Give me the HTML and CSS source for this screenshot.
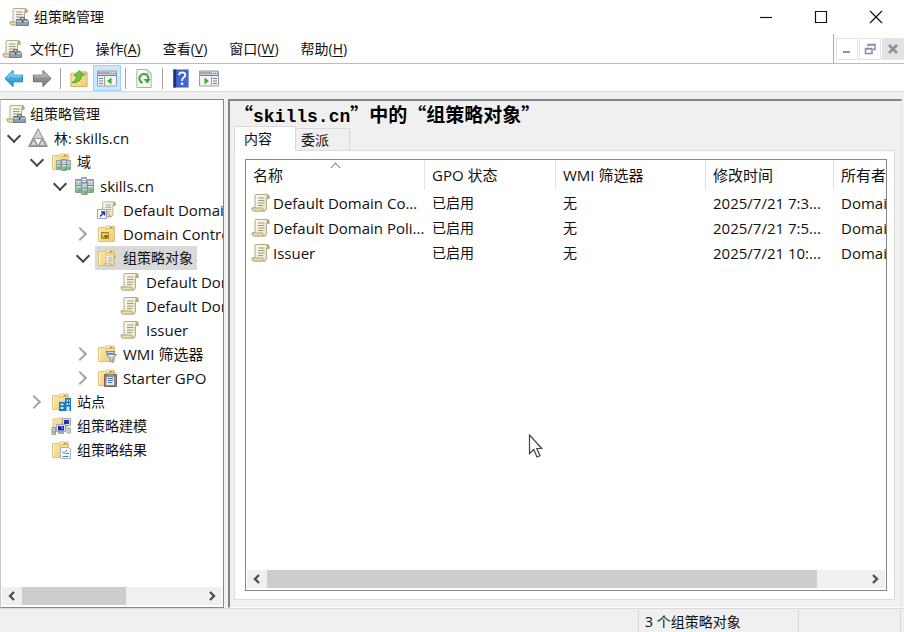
FILE: index.html
```html
<!DOCTYPE html>
<html lang="zh-CN">
<head>
<meta charset="utf-8">
<title>组策略管理</title>
<link rel="stylesheet" href="styles.css">
</head>
<body>
<svg class="sprite" aria-hidden="true">
  <defs>
    <linearGradient id="gold" x1="0" y1="0" x2="1" y2="1"><stop offset="0" stop-color="#fbe9ac"/><stop offset="1" stop-color="#f0cb74"/></linearGradient>
    <linearGradient id="paper" x1="0" y1="0" x2="1" y2="1"><stop offset="0" stop-color="#fffef5"/><stop offset="1" stop-color="#eadfb2"/></linearGradient>
    <linearGradient id="blue" x1="0" y1="0" x2="0" y2="1"><stop offset="0" stop-color="#63cbf6"/><stop offset="1" stop-color="#168fdc"/></linearGradient>
    <linearGradient id="steel" x1="0" y1="0" x2="0" y2="1"><stop offset="0" stop-color="#aaa"/><stop offset="1" stop-color="#777"/></linearGradient>
  </defs>
  <symbol id="scroll" viewBox="0 0 20 20">
    <path d="M5 1.500H16.500q1.500 0 1.500 2.500v1.500h-2.500V15q0 3-2.500 3H3q-2-.2-2-3h3V3q0-1.500 1-1.500z" fill="url(#paper)" stroke="#b3aa8d"/>
    <path d="M15.500 5.500V3.500q.2-2 1.500-2T18.500 4v1.500z" fill="#b5a878"/>
    <path d="M1 15h10.500q.2 3 2 3H3q-2-.2-2-3z" fill="#f3dfa0" stroke="#b0a689"/>
    <path d="M7 5h6.500M7 7.500h6.500M7 10h6.500M7 12.500h5" stroke="#9b9b98"/>
  </symbol>
  <symbol id="console" viewBox="0 0 20 20">
    <use href="#scroll" width="20" height="20"/>
    <path d="M11.500 12.500v-1q0-1 1-1h2q1 0 1 1v1" fill="none" stroke="#55626c" stroke-width="1.200"/>
    <path d="M8 12.500h10.500l1 2v4h-12v-4z" fill="#8fa0ae" stroke="#61717e" stroke-width=".8"/>
    <path d="M8 14.500h11" stroke="#c9d5dd" stroke-width=".8"/><path d="M12.800 13.500h1.700v2h-1.700z" fill="#3f4c56"/>
  </symbol>
  <symbol id="folder" viewBox="0 0 20 20">
    <path d="M1.500 3.500h6l1.500-1.500h7.500q1 0 1 1V17.500h-16z" fill="url(#gold)" stroke="#dfc47c"/>
    <path d="M10 3.500h6" stroke="#fff" stroke-width="1.500"/><path d="M12.500 3.500h3" stroke="#4f9de2" stroke-width="1.300"/>
    <path d="M8 6l1.500-1.500h8" fill="none" stroke="#d9b967"/><path d="M2.500 5v12" stroke="#fff3c4"/>
  </symbol>
  <symbol id="server" viewBox="0 0 6 12">
    <path d="M.5.500h5v11h-5z" fill="#a6b5bd" stroke="#7b8b94" stroke-width=".8"/>
    <path d="M1 2.500h4M1 4.500h4M1 6.500h4" stroke="#e1ebef"/><path d="M1 5.500h4" stroke="#71828c"/><path d="M2.500 8.500h2.500v2.500H2.500z" fill="#43d82d"/>
  </symbol>
  <symbol id="servers" viewBox="0 0 20 20">
    <use href="#server" x="7" y="1" width="6" height="12"/><use href="#server" x="1" y="3" width="7" height="14"/><use href="#server" x="13" y="3" width="7" height="14"/><use href="#server" x="7" y="6" width="7" height="13"/>
  </symbol>
  <symbol id="forest" viewBox="0 0 20 20">
    <path d="M10 .8 19.500 18.500H.5z" fill="#b3b7ba" stroke="#8d9296"/>
    <path d="M10 2 14 10H6z" fill="#d0d3d5"/>
    <path d="M6 10.500h8L10 18z" fill="#fff" stroke="#999"/><path d="m5.500 11.500 3.500 6H2.500zM14.500 11.500l3 6H11z" fill="#d8dbdc" stroke="#888" stroke-width=".8"/>
  </symbol>
  <symbol id="domains" viewBox="0 0 20 20">
    <use href="#folder" width="20" height="20"/><use href="#server" x="5" y="8" width="5" height="10"/><use href="#server" x="15" y="8" width="5" height="10"/><use href="#server" x="10" y="7" width="6" height="12"/>
  </symbol>
  <symbol id="link" viewBox="0 0 20 20">
    <use href="#scroll" x="2" width="18" height="19"/><path d="M.5 9.500h9v9h-9z" fill="#fff" stroke="#9da0d0"/>
    <path d="M4 12h3.500v3.500M7 12.500 3 16.500" fill="none" stroke="#26309b" stroke-width="1.500"/>
  </symbol>
  <symbol id="ou" viewBox="0 0 20 20">
    <use href="#folder" width="20" height="20"/><path d="M4.500 8.500h7v6h-7z" fill="#d8ad35" stroke="#a98424"/><path d="M5 10.500h6" stroke="#fbe69d"/><path d="M7.500 11h3v2.500h-3z" fill="#6c5214"/>
  </symbol>
  <symbol id="objects" viewBox="0 0 20 20">
    <use href="#folder" width="20" height="20"/><use href="#scroll" x="6" y="6" width="14" height="13"/>
  </symbol>
  <symbol id="wmi" viewBox="0 0 20 20">
    <use href="#folder" width="20" height="20"/><path d="M9 7.500h9l-1 2h-7zM9.500 10.500h10l-3.500 4v4l-3-1.500v-2.500z" fill="#c3d1d9" stroke="#7c8d97"/><path d="M11.500 11.500h5" stroke="#fff"/>
  </symbol>
  <symbol id="starter" viewBox="0 0 20 20">
    <use href="#folder" width="20" height="20"/><path d="M7.500 6.500h12v12h-12z" fill="#b27a5b" stroke="#8b5d45"/><path d="M9.500 8.500h8v9h-9z" fill="#dce9f4" stroke="#7990aa"/><path d="M11 5.500h5v2h-5z" fill="#999"/><path d="M11 10.500h5M11 12.500h5M11 14.500h4" stroke="#4b78a5"/>
  </symbol>
  <symbol id="sites" viewBox="0 0 20 20">
    <use href="#folder" width="20" height="20"/><path d="M8 10h6V6h6v13H8z" fill="#1678bd"/><path d="M9.500 11.500h3v2h-3zM9.500 15h3v2h-3zM15.500 7.500h1.500v2h-1.500zM18 7.500h1v2h-1zM15.500 11h1.500v2h-1.500zM18 11h1v2h-1zM15.500 14.500h3V19h-3z" fill="#bfe8ff"/>
  </symbol>
  <symbol id="model" viewBox="0 0 20 20">
    <path d="M2 3h4l1-1h5v12H2z" fill="url(#gold)" stroke="#dfc47c"/><path d="M11.500 2.500h8v7h-8z" fill="#dedfe3" stroke="#a0a3ab"/><path d="M13 4h5v4h-5z" fill="#2439b1"/><path d="M15.500 9.500v2M16 12h3.500v5H16z" fill="#d0d1d3" stroke="#a0a3ab"/>
    <path d="M5.500 8.500h9v7h-9z" fill="#dedfe3" stroke="#a0a3ab"/><path d="M7 10h6v4.500H7z" fill="#1725b5"/><path d="M1 11.500h3.500v7H1z" fill="#c3c4c4" stroke="#999"/><path d="M7 17h6" stroke="#aaa" stroke-width="2"/><path d="M2 16h2" stroke="#36bd37"/><path d="m10 10 2 3" stroke="#a8b4ff"/>
  </symbol>
  <symbol id="result" viewBox="0 0 20 20">
    <use href="#folder" width="20" height="20"/><path d="M9.500 7.500h8l2 2v9h-10z" fill="#f8fafc" stroke="#a9b2b9"/><path d="m11.500 11.500 1.500 2 3-3.500M14.500 13.500h3.500M11.500 16.500h6" fill="none" stroke="#3c89ba"/>
  </symbol>
  <symbol id="window" viewBox="0 0 20 18">
    <path d="M.5 1.500h19v15H.5z" fill="#f3f4f5" stroke="#9a9fa6"/><path d="M1 2h18v3H1z" fill="#a3a9b2"/><path d="M13 3h1M15 3h1M17 3h1" stroke="#fff"/><path d="M1 6h18" stroke="#7d8289"/>
  </symbol>
</svg>

<header class="titlebar">
  <svg class="icon"><use href="#console"/></svg>
  <span class="title">组策略管理</span>
  <div class="window-buttons">
    <button aria-label="最小化"><svg viewBox="0 0 14 14"><path d="M1 7.500h12" /></svg></button>
    <button aria-label="最大化"><svg viewBox="0 0 14 14"><path d="M1.500 1.500h11v11h-11z"/></svg></button>
    <button aria-label="关闭"><svg viewBox="0 0 14 14"><path d="m1 1 12 12M13 1 1 13"/></svg></button>
  </div>
</header>

<nav class="menubar" aria-label="菜单">
  <svg class="icon"><use href="#console"/></svg>
  <div class="menus">
    <button>文件(<u>F</u>)</button><button>操作(<u>A</u>)</button><button>查看(<u>V</u>)</button><button>窗口(<u>W</u>)</button><button>帮助(<u>H</u>)</button>
  </div>
  <div class="child-buttons">
    <button aria-label="最小化子窗口"><svg viewBox="0 0 12 12"><path d="M2 9h7" stroke-width="2"/></svg></button>
    <button aria-label="还原子窗口"><svg viewBox="0 0 12 12"><path d="M4 3.500V1.500h7v5H9M4 2h7M1.500 5.500h6.500v5H1.500zM1 6h7" stroke-width="1.500"/></svg></button>
    <button class="muted" aria-label="关闭子窗口"><svg viewBox="0 0 12 12"><path d="m2 2 8 8M10 2l-8 8" stroke-width="2.500"/></svg></button>
  </div>
</nav>

<div class="toolbar" role="toolbar" aria-label="工具栏">
  <button aria-label="后退"><svg viewBox="0 0 20 20"><path d="m.5 10 8.500-8.500v5h10v7H9v5z" fill="url(#blue)" stroke="#287cab"/><path d="m3 9.500 5-5v3h10" fill="none" stroke="#a9e5ff"/></svg></button>
  <button aria-label="前进"><svg viewBox="0 0 20 20"><path d="m19.500 10-8.500-8.500v5H1v7h10v5z" fill="url(#steel)" stroke="#666"/><path d="M2 7.500h10v-3l5 5" fill="none" stroke="#ccc"/></svg></button>
  <i class="separator"></i>
  <button aria-label="上移"><svg viewBox="0 0 20 20"><path d="M1.500 4.500H11l2-1.500h4.500q1 0 1 1v14.500h-17z" fill="url(#gold)" stroke="#d3ae57"/><path d="M13 5h5" stroke="#4b9cdd"/><path d="M2.500 14.500Q7.500 12 7.500 7H4.500l6-5.500 5 5.500h-3q0 7.500-10 7.500z" fill="#69c936" stroke="#409722" stroke-width=".8"/></svg></button>
  <button class="active" aria-label="显示控制台树" aria-pressed="true"><svg viewBox="0 0 20 18"><use href="#window" width="20" height="18"/><path d="M7.500 7v9" stroke="#999"/><path d="M2 9h4M2 11.500h4M2 14h4" stroke="#5484b2"/><path d="M14.500 8v7L10 11.500z" fill="#3fae37"/></svg></button>
  <i class="separator"></i>
  <button aria-label="刷新"><svg viewBox="0 0 20 20"><path d="M2.500.500h11l4 4v15h-15z" fill="#f7f8f8" stroke="#a5a9ac"/><path d="M13.500.500v4h4" fill="none" stroke="#b5b8ba"/><path d="M8.500 14.500A4.700 4.700 0 1 1 14.500 11" fill="none" stroke="#39ad3a" stroke-width="2.300"/><path d="M9.500 10.500H17l-3.500 5z" fill="#39ad3a"/></svg></button>
  <i class="separator"></i>
  <button aria-label="帮助"><svg viewBox="0 0 20 20"><path d="M2 .5h16v19H2z" fill="#3f66cf"/><path d="M2 .5h3v19H2z" fill="#1c3388"/><path d="M8 6.500q.2-3 3.200-3T14.500 6q0 2-1.700 3t-1.600 3.500" fill="none" stroke="#fff" stroke-width="2"/><circle cx="11.200" cy="15.500" r="1.400" fill="#fff"/></svg></button>
  <button aria-label="显示操作窗格"><svg viewBox="0 0 20 18"><use href="#window" width="20" height="18"/><path d="M12.500 7v9" stroke="#999"/><path d="M14 9h4M14 11.500h4M14 14h4" stroke="#5484b2"/><path d="M5.500 8v7l4.500-3.500z" fill="#3fae37"/></svg></button>
</div>

<main class="workspace">
  <aside class="tree-pane">
    <ul class="tree root">
      <li><div class="node"><svg class="icon"><use href="#console"/></svg><span>组策略管理</span></div>
      <ul class="tree top">
        <li><div class="node"><button class="chevron open" aria-label="折叠"></button><svg class="icon"><use href="#forest"/></svg><span>林: <span class="wide">skills.cn</span></span></div>
        <ul class="tree">
          <li><div class="node"><button class="chevron open" aria-label="折叠"></button><svg class="icon"><use href="#domains"/></svg><span>域</span></div>
          <ul class="tree">
            <li><div class="node"><button class="chevron open" aria-label="折叠"></button><svg class="icon"><use href="#servers"/></svg><span class="wide">skills.cn</span></div>
            <ul class="tree">
              <li><div class="node"><i class="chevron"></i><svg class="icon"><use href="#link"/></svg><span class="wide">Default Domain Policy</span></div></li>
              <li><div class="node"><button class="chevron closed" aria-label="展开"></button><svg class="icon"><use href="#ou"/></svg><span class="wide">Domain Controllers</span></div></li>
              <li><div class="node"><button class="chevron open" aria-label="折叠"></button><div class="selected"><svg class="icon"><use href="#objects"/></svg><span>组策略对象</span></div></div>
              <ul class="tree">
                <li><div class="node"><i class="chevron"></i><svg class="icon"><use href="#scroll"/></svg><span class="wide">Default Domain Controllers Policy</span></div></li>
                <li><div class="node"><i class="chevron"></i><svg class="icon"><use href="#scroll"/></svg><span class="wide">Default Domain Policy</span></div></li>
                <li><div class="node"><i class="chevron"></i><svg class="icon"><use href="#scroll"/></svg><span class="wide">Issuer</span></div></li>
              </ul></li>
              <li><div class="node"><button class="chevron closed" aria-label="展开"></button><svg class="icon"><use href="#wmi"/></svg><span class="wide">WMI 筛选器</span></div></li>
              <li><div class="node"><button class="chevron closed" aria-label="展开"></button><svg class="icon"><use href="#starter"/></svg><span class="wide">Starter GPO</span></div></li>
            </ul></li>
          </ul></li>
          <li><div class="node"><button class="chevron closed" aria-label="展开"></button><svg class="icon"><use href="#sites"/></svg><span>站点</span></div></li>
          <li><div class="node"><i class="chevron"></i><svg class="icon"><use href="#model"/></svg><span>组策略建模</span></div></li>
          <li><div class="node"><i class="chevron"></i><svg class="icon"><use href="#result"/></svg><span>组策略结果</span></div></li>
        </ul></li>
      </ul></li>
    </ul>
    <div class="scrollbar">
      <button aria-label="向左滚动"><svg viewBox="0 0 10 10"><path d="M7 1 3 5l4 4"/></svg></button>
      <div class="track"><div class="thumb short"></div></div>
      <button aria-label="向右滚动"><svg viewBox="0 0 10 10"><path d="m3 1 4 4-4 4"/></svg></button>
    </div>
  </aside>

  <section class="detail-pane">
    <h1>“<span class="latin">skills.cn</span>”中的“组策略对象”</h1>
    <div class="tabs" role="tablist">
      <button class="tab current" role="tab" aria-selected="true">内容</button>
      <button class="tab" role="tab" aria-selected="false">委派</button>
    </div>
    <div class="tab-page">
      <div class="list">
        <div class="list-view">
          <table>
            <colgroup><col class="c-name"><col class="c-state"><col class="c-wmi"><col class="c-time"><col class="c-owner"></colgroup>
            <thead><tr><th class="sorted">名称</th><th>GPO 状态</th><th>WMI 筛选器</th><th>修改时间</th><th>所有者</th></tr></thead>
            <tbody>
              <tr><td><div class="name"><svg class="icon"><use href="#scroll"/></svg><span class="wide">Default Domain Co...</span></div></td><td>已启用</td><td>无</td><td class="wide">2025/7/21 7:3...</td><td class="wide">Domain Admins</td></tr>
              <tr><td><div class="name"><svg class="icon"><use href="#scroll"/></svg><span class="wide">Default Domain Poli...</span></div></td><td>已启用</td><td>无</td><td class="wide">2025/7/21 7:5...</td><td class="wide">Domain Admins</td></tr>
              <tr><td><div class="name"><svg class="icon"><use href="#scroll"/></svg><span class="wide">Issuer</span></div></td><td>已启用</td><td>无</td><td class="wide">2025/7/21 10:...</td><td class="wide">Domain Admins</td></tr>
            </tbody>
          </table>
        </div>
        <div class="scrollbar">
          <button aria-label="向左滚动"><svg viewBox="0 0 10 10"><path d="M7 1 3 5l4 4"/></svg></button>
          <div class="track"><div class="thumb long"></div></div>
          <button aria-label="向右滚动"><svg viewBox="0 0 10 10"><path d="m3 1 4 4-4 4"/></svg></button>
        </div>
      </div>
    </div>
  </section>
</main>

<footer class="statusbar">
  <span class="cell grow"></span><span class="cell count">3 个组策略对象</span><span class="cell end"></span>
</footer>

<svg class="pointer" viewBox="0 0 16 24" aria-hidden="true"><path d="M1.500 1v18.500l4.300-4 3.200 7.500 3-1.300-3.200-7.200h5z" fill="#fff" stroke="#444" stroke-width="1.200"/></svg>
</body>
</html>
```
FILE: styles.css
```css
* { box-sizing: border-box; }

body {
  margin: 0;
  height: 100vh;
  display: flex;
  flex-direction: column;
  overflow: hidden;
  background: #f0f0f0;
  color: #111;
  font: 14px/24px "Open Sans", "Noto Sans CJK SC", sans-serif;
}

button {
  padding: 0;
  border: 0;
  background: none;
  color: inherit;
  font: inherit;
}

.sprite { position: absolute; width: 0; height: 0; }
.icon { flex: none; width: 20px; height: 20px; }
.wide { font-size: 15px; }

.titlebar {
  flex: none;
  display: flex;
  align-items: center;
  gap: 5px;
  height: 34px;
  padding-left: 9px;
  background: #fff;
}
.window-buttons { display: flex; margin-left: auto; padding-right: 1px; }
.window-buttons button { width: 55px; height: 32px; display: grid; place-items: center; }
.window-buttons svg { width: 14px; height: 14px; fill: none; stroke: #111; stroke-width: 1.2; }

.menubar {
  flex: none;
  display: flex;
  align-items: center;
  height: 30px;
  padding-left: 2px;
  background: #fff;
  border-bottom: 1px solid #b9bcc2;
}
.menus { display: flex; gap: 22px; margin-left: 8px; }
.menus u { text-underline-offset: 2px; }
.child-buttons {
  display: flex;
  align-items: center;
  gap: 1px;
  height: 100%;
  margin-left: auto;
  padding-left: 2px;
  border-left: 1px solid #a9adb5;
}
.child-buttons button { width: 22px; height: 22px; display: grid; place-items: center; border: 1px solid #e3e3e3; }
.child-buttons .muted { background: #e3e3e3; }
.child-buttons svg { width: 12px; height: 12px; fill: none; stroke: #8393a3; }

.toolbar {
  flex: none;
  display: flex;
  align-items: flex-end;
  height: 28px;
  background: #fff;
  border-bottom: 1px solid #d9d9d9;
}
.toolbar button { width: 28px; height: 26px; display: grid; place-items: center; }
.toolbar .active { background: #cce8ff; border: 1px solid #99d1ff; }
.toolbar svg { width: 20px; height: 19px; }
.separator { width: 1px; height: 21px; margin: 0 4px 2px; background: #a5a5a5; }

.workspace {
  flex: 1;
  min-height: 0;
  display: grid;
  grid-template-columns: 224px minmax(0, 1fr);
  gap: 4px;
  padding: 7px 2px 0 0;
}

.tree-pane {
  min-width: 0;
  display: flex;
  flex-direction: column;
  background: #fff;
  border: 1px solid #828790;
  border-left-color: #c8c9cf;
}
.tree { margin: 0; padding: 0 0 0 23px; list-style: none; }
.tree.root { flex: 1; padding: 2px 0 0; overflow: hidden; }
.tree.top { padding-left: 5px; }
.node { display: flex; align-items: center; gap: 6px; height: 24px; white-space: nowrap; }
.root > li > .node { padding-left: 5px; gap: 4px; }
.chevron { flex: none; width: 16px; height: 16px; display: grid; place-items: center; }
.chevron.open::before, .chevron.closed::before {
  content: "";
  width: 8px;
  height: 8px;
  border: solid #444;
  border-width: 0 2px 2px 0;
  transform: translateY(-2px) rotate(45deg);
}
.chevron.closed::before { border-color: #a5a5a5; transform: translateX(-3px) rotate(-45deg); }
.selected { display: flex; align-items: center; gap: 6px; height: 24px; margin-left: -2px; padding: 0 4px 0 2px; background: #d9d9d9; }

.scrollbar { flex: none; display: flex; height: 18px; margin: 0 1px 2px; background: #f0f0f0; }
.scrollbar button { width: 20px; display: grid; place-items: center; }
.scrollbar svg { width: 10px; height: 10px; fill: none; stroke: #505050; stroke-width: 2.4; }
.track { flex: 1; }
.thumb { height: 100%; background: #cdcdcd; }
.thumb.short { width: 58%; }
.thumb.long { width: 92%; }

.detail-pane {
  min-width: 0;
  display: flex;
  flex-direction: column;
  padding: 1px 6px 7px 4px;
  border: 2px solid #858585;
  border-width: 2px 1px 1px 2px;
  border-right-color: #e3e3e3;
  border-bottom-color: #fff;
}
h1 { height: 24px; margin: 0; font: bold 19px/24px "Noto Sans CJK SC", sans-serif; color: #000; white-space: nowrap; }
.latin { font: bold 18px/18px "Liberation Mono", monospace; }
.tabs { display: flex; align-items: flex-end; height: 24px; }
.tab { width: 54px; height: 22px; padding-left: 5px; text-align: left; line-height: 22px; border: 1px solid #d9d9d9; border-bottom: 0; border-left: 0; }
.tab.current { z-index: 1; width: 62px; height: 25px; margin-bottom: -1px; padding-left: 9px; background: #fff; border-left: 1px solid #d9d9d9; }
.tab-page { flex: 1; min-height: 0; display: flex; padding: 8px 7px 8px 10px; background: #fff; border: 1px solid #dcdcdc; }
.list { flex: 1; min-width: 0; display: flex; flex-direction: column; border: 1px solid #828790; }
.list-view { flex: 1; min-height: 0; overflow: hidden; }

table { width: 760px; table-layout: fixed; border-collapse: collapse; }
.c-name { width: 179px; }
.c-state { width: 131px; }
.c-wmi { width: 150px; }
.c-time { width: 128px; }
th, td { padding: 0 0 0 7px; height: 25px; text-align: left; font-weight: normal; white-space: nowrap; }
th { height: 30px; font-size: 15px; background: linear-gradient(#e3e3e3, #e3e3e3) right / 1px 100% no-repeat; }
.sorted { position: relative; }
.sorted::after {
  content: "";
  position: absolute;
  top: 4px;
  left: 48%;
  width: 6px;
  height: 6px;
  border: solid #888;
  border-width: 1px 0 0 1px;
  transform: rotate(45deg);
}
td:first-child { padding-left: 5px; }
.name { display: flex; align-items: center; gap: 2px; }

.statusbar { flex: none; display: flex; height: 24px; border-top: 1px solid #dadada; padding-top: 1px; }
.cell { border-right: 1px solid #d5d5d5; padding-left: 6px; }
.grow { flex: 1; }
.count { width: 160px; }
.end { width: 102px; margin-right: 3px; }

.pointer { position: absolute; left: 528px; top: 434px; width: 16px; height: 24px; }
```
